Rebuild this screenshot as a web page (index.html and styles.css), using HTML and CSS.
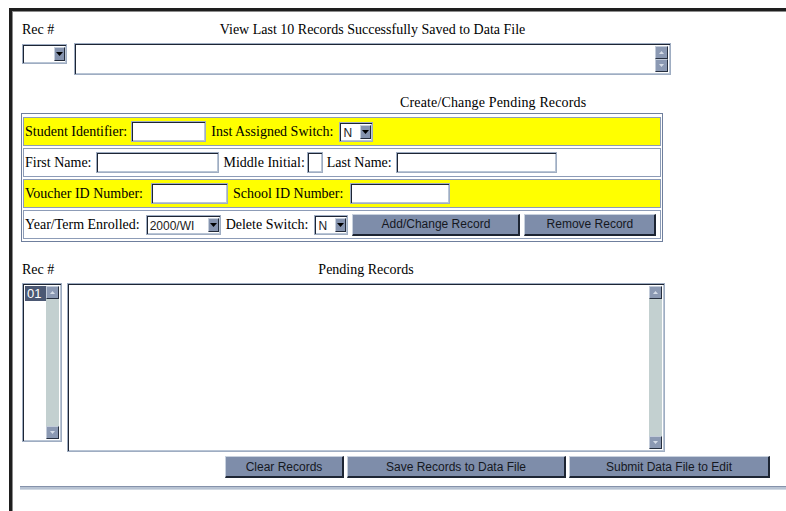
FILE: index.html
```html
<!DOCTYPE html>
<html lang="en">
<head>
<meta charset="utf-8">
<title>Pending Records</title>
<link rel="stylesheet" href="styles.css">
</head>
<body>
<div class="frame">

  <!-- last saved records -->
  <section class="saved">
    <div class="rec-col">
      <div class="label">Rec #</div>
      <span class="combo combo-rec">
        <span class="combo-val"></span>
        <span class="combo-btn"><svg width="7" height="4" viewBox="0 0 7 4"><path d="M0 0h7L3.5 4z" fill="#000"/></svg></span>
      </span>
    </div>
    <div class="main-col">
      <div class="label center">View Last 10 Records Successfully Saved to Data File</div>
      <div class="memo memo-saved">
        <textarea class="memo-text"></textarea>
        <div class="vscroll">
          <span class="sbtn"><svg width="5" height="3" viewBox="0 0 5 3"><path d="M0 3h5L2.5 0z" fill="#d6dde8"/></svg></span>
          <span class="sbtn"><svg width="5" height="3" viewBox="0 0 5 3"><path d="M0 0h5L2.5 3z" fill="#d6dde8"/></svg></span>
        </div>
      </div>
    </div>
  </section>

  <!-- create / change form -->
  <section class="edit">
    <div class="caption">Create/Change Pending Records</div>
    <div class="panel">
      <div class="row hl">
        <span>Student Identifier:</span>
        <input class="field w75" type="text">
        <span class="sp1">Inst Assigned Switch:</span>
        <span class="combo w34 sp2">
          <span class="combo-val">N</span>
          <span class="combo-btn"><svg width="7" height="4" viewBox="0 0 7 4"><path d="M0 0h7L3.5 4z" fill="#000"/></svg></span>
        </span>
      </div>
      <div class="row">
        <span>First Name:</span>
        <input class="field w123" type="text">
        <span class="sp1">Middle Initial:</span>
        <input class="field w16 pull1" type="text">
        <span>Last Name:</span>
        <input class="field w161" type="text">
      </div>
      <div class="row hl">
        <span>Voucher ID Number:</span>
        <input class="field w77 sp4" type="text">
        <span class="sp1">School ID Number:</span>
        <input class="field w100 sp3" type="text">
      </div>
      <div class="row">
        <span>Year/Term Enrolled:</span>
        <span class="combo w75 sp2">
          <span class="combo-val">2000/WI</span>
          <span class="combo-btn"><svg width="7" height="4" viewBox="0 0 7 4"><path d="M0 0h7L3.5 4z" fill="#000"/></svg></span>
        </span>
        <span class="sp1">Delete Switch:</span>
        <span class="combo w34 sp2">
          <span class="combo-val">N</span>
          <span class="combo-btn"><svg width="7" height="4" viewBox="0 0 7 4"><path d="M0 0h7L3.5 4z" fill="#000"/></svg></span>
        </span>
        <button class="btn sp1 b168" type="button">Add/Change Record</button>
        <button class="btn b132" type="button">Remove Record</button>
      </div>
    </div>
  </section>

  <!-- pending records list -->
  <section class="pending">
    <div class="rec-col2">
      <div class="label">Rec #</div>
      <div class="listbox">
        <div class="list-items"><div class="item sel">01</div></div>
        <div class="vscroll vscroll-track">
          <span class="sbtn"><svg width="5" height="3" viewBox="0 0 5 3"><path d="M0 3h5L2.5 0z" fill="#d6dde8"/></svg></span>
          <span class="track"></span>
          <span class="sbtn"><svg width="5" height="3" viewBox="0 0 5 3"><path d="M0 0h5L2.5 3z" fill="#d6dde8"/></svg></span>
        </div>
      </div>
    </div>
    <div class="main-col2">
      <div class="label center">Pending Records</div>
      <div class="memo memo-pending">
        <textarea class="memo-text"></textarea>
        <div class="vscroll vscroll-track">
          <span class="sbtn"><svg width="5" height="3" viewBox="0 0 5 3"><path d="M0 3h5L2.5 0z" fill="#d6dde8"/></svg></span>
          <span class="track"></span>
          <span class="sbtn"><svg width="5" height="3" viewBox="0 0 5 3"><path d="M0 0h5L2.5 3z" fill="#d6dde8"/></svg></span>
        </div>
      </div>
    </div>
  </section>

  <div class="actions">
    <button class="btn b119" type="button">Clear Records</button>
    <button class="btn b219" type="button">Save Records to Data File</button>
    <button class="btn b201" type="button">Submit Data File to Edit</button>
  </div>

  <div class="rule"></div>
</div>
</body>
</html>
```
FILE: styles.css
```css
* { box-sizing: border-box; }

html, body {
  margin: 0;
  background: #fff;
}

body {
  font: 14px/16px "Liberation Serif", "Times New Roman", serif;
  color: #000;
}

/* framed page area */
.frame {
  margin: 8px 0 0 9px;
  min-height: 503px;
  border-top: 3px solid #1e1e1e;
  border-left: 3px solid #1e1e1e;
  box-shadow: inset 1px 1px 0 #8c8c8c;
  padding: 11px 0 0 10px;
}

.label {
  height: 16px;
  white-space: nowrap;
}
.center { text-align: center; }

/* ---------- saved records ---------- */
.saved {
  display: flex;
  gap: 7px;
}
.rec-col { width: 45px; }
.main-col { width: 597px; }
.saved .label { margin-bottom: 5px; }
.combo-rec { margin-top: 1px; width: 45px; }

/* sunken boxes */
.memo, .listbox, .field, .combo {
  border: 1px solid #9fadc2;
  box-shadow: inset 1px 1px 0 #1d2534, inset -1px -1px 0 #b9c5d5;
  background: #fff;
}

.memo {
  display: flex;
  padding: 2px;
}
.memo-saved { height: 32px; }
.memo-pending { height: 169px; }

.memo-text {
  flex: 1;
  border: 0;
  margin: 0;
  padding: 1px 2px;
  resize: none;
  outline: none;
  font: 13px "Liberation Mono", monospace;
  background: transparent;
}

.vscroll {
  width: 13px;
  display: flex;
  flex-direction: column;
}
.vscroll-track { background: #c3d0d0; }

.sbtn {
  width: 13px;
  height: 13px;
  flex: none;
  display: flex;
  align-items: center;
  justify-content: center;
  background: #8b99b3;
  border: 1px solid;
  border-color: #c2cbd9 #273040 #273040 #c2cbd9;
}
.track { flex: 1; }

/* ---------- combos ---------- */
.combo {
  display: inline-flex;
  height: 20px;
  padding: 2px 1px 2px 2px;
  flex: none;
}
.combo-val {
  flex: 1;
  font: 12px/16px "Liberation Sans", Arial, sans-serif;
  padding-left: 1px;
  color: #222;
}
.combo-btn {
  width: 11px;
  display: flex;
  align-items: center;
  justify-content: center;
  background: #8593ae;
  border: 1px solid;
  border-color: #c6cfdc #232b3a #232b3a #c6cfdc;
}

.w34 { width: 34px; }
.w75 { width: 75px; }
.w77 { width: 77px; }
.w100 { width: 100px; }
.w123 { width: 123px; }
.w16 { width: 16px; }
.w161 { width: 161px; }

.field {
  height: 21px;
  margin: 0;
  padding: 0 3px;
  flex: none;
  font: 12px "Liberation Sans", Arial, sans-serif;
  outline: none;
}

/* ---------- create / change panel ---------- */
.edit { margin-top: 20px; }
.caption {
  height: 16px;
  padding-left: 378px;
  margin-bottom: 2px;
  letter-spacing: 0.15px;
}
.panel {
  width: 642px;
  margin-left: -1px;
  border: 1px solid #6f7f9d;
  padding: 3px 1px 2px;
  display: flex;
  flex-direction: column;
  gap: 2px;
}
.row {
  height: 29px;
  border: 1px solid #8d9cb7;
  display: flex;
  align-items: center;
  gap: 4px;
  padding-left: 1px;
  white-space: nowrap;
}
.row.hl { background: #ffff00; }
.sp1 { margin-left: 1px; }
.sp2 { margin-left: 2px; }
.sp3 { margin-left: 3px; }
.sp4 { margin-left: 4px; }
.pull1 { margin-left: -2px; }

/* ---------- buttons ---------- */
.btn {
  height: 22px;
  margin: 0;
  padding: 0;
  flex: none;
  font: 12px "Liberation Sans", Arial, sans-serif;
  color: #15181f;
  background: #7e8daa;
  border-style: solid;
  border-width: 1px 2px 2px 1px;
  border-color: #c8d1de #1d2533 #1d2533 #c8d1de;
}
.b168 { width: 168px; }
.b132 { width: 132px; }
.b119 { width: 119px; }
.b219 { width: 219px; }
.b201 { width: 201px; }

/* ---------- pending list ---------- */
.pending {
  margin-top: 20px;
  display: flex;
  gap: 5px;
}
.rec-col2 { width: 40px; }
.main-col2 { width: 598px; }
.pending .label { margin-bottom: 5px; }

.listbox {
  height: 159px;
  display: flex;
  padding: 2px;
}
.list-items { flex: 1; }
.item {
  height: 15px;
  font: 13px/15px "Liberation Sans", Arial, sans-serif;
  padding-left: 2px;
}
.item.sel {
  background: #4b5873;
  color: #fff;
}

.actions {
  margin-top: 4px;
  padding-left: 203px;
  display: flex;
  gap: 3px;
}

.rule {
  margin: 8px 0 0 -2px;
  height: 4px;
  border-top: 1px solid #8592aa;
  border-bottom: 1px solid #d0d8e2;
  background: #b8c3d3;
}
```
